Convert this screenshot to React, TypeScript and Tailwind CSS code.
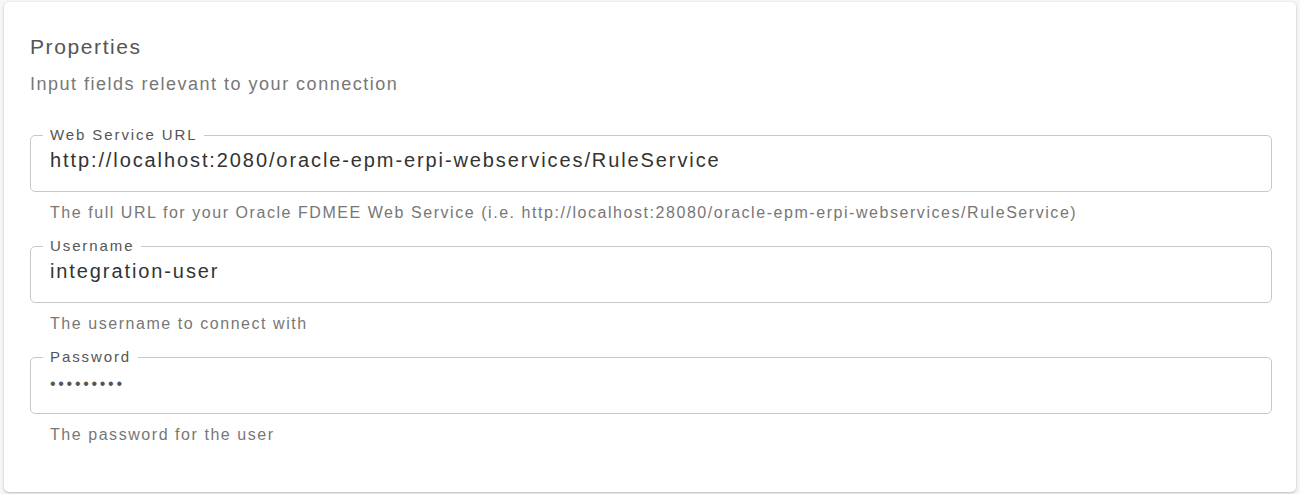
import React from "react";

const font = { fontFamily: '"Liberation Sans", Arial, sans-serif' };

function Field({ label, value, helper, password }: { label: string; value: string; helper: string; password?: boolean }) {
  return (
    <div className="flex flex-col">
      <fieldset className="border border-[#c8c8c8] rounded-[5px] h-[65px] px-[19px] m-0">
        <legend className="ml-[-7px] px-[7px] text-[15px] leading-[16px] tracking-[1.9px] text-[#555]">{label}</legend>
        {password ? (
          <div className="mt-[7px] text-[16px] leading-[24px] text-[#555] tracking-[2.7px]">{value}</div>
        ) : (
          <div className="mt-[5px] text-[20px] leading-[24px] tracking-[1.9px] text-[#333]">{value}</div>
        )}
      </fieldset>
      <div className="pl-[20px] mt-[11px] h-[35px] text-[16px] leading-[20px] tracking-[1.55px] text-[#777]">{helper}</div>
    </div>
  );
}

export default function App() {
  return (
    <div className="w-[1300px] h-[494px] bg-[#f7f7f7] pt-[2px] px-[4px]" style={font}>
      <div className="bg-white rounded-[5px] h-[490px] shadow-[0_1px_3px_rgba(0,0,0,0.25)] pl-[26px] pr-[24px] pt-[33px]">
        <div className="text-[21px] leading-[24px] tracking-[1.6px] text-[#555]">Properties</div>
        <div className="mt-[14px] text-[18px] leading-[22px] tracking-[1.5px] text-[#777]">Input fields relevant to your connection</div>
        <div className="mt-[32px]">
          <Field
            label="Web Service URL"
            value="http://localhost:2080/oracle-epm-erpi-webservices/RuleService"
            helper="The full URL for your Oracle FDMEE Web Service (i.e. http://localhost:28080/oracle-epm-erpi-webservices/RuleService)"
          />
          <Field label="Username" value="integration-user" helper="The username to connect with" />
          <Field label="Password" value="•••••••••" helper="The password for the user" password />
        </div>
      </div>
    </div>
  );
}
